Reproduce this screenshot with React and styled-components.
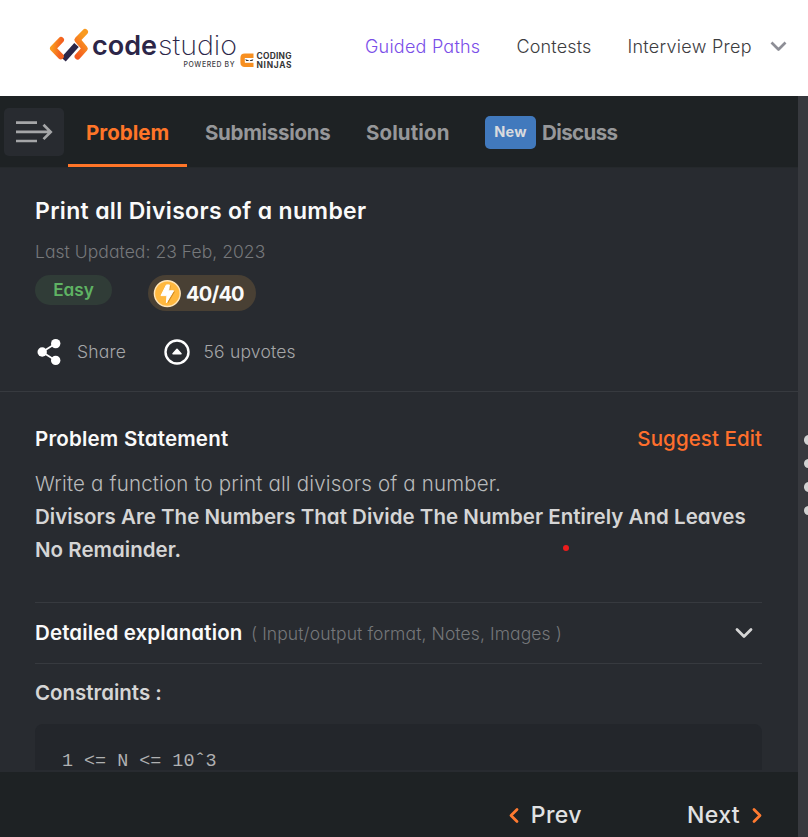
import React from 'react';
import styled, { createGlobalStyle } from 'styled-components';

const Global = createGlobalStyle`
  * { box-sizing: border-box; }
  body { margin: 0; font-family: Inter, "Open Sans", sans-serif; font-feature-settings: "cv11"; overflow: hidden; }
  h1, h2, p, pre { margin: 0; }
  svg { display: block; flex: none; }
`;

const Page = styled.div`
  width: 808px;
  height: 837px;
  display: flex;
  flex-direction: column;
  background: #282b30;
`;

const Header = styled.header`
  height: 96px;
  flex: none;
  display: flex;
  align-items: flex-start;
  background: #fff;
  padding: 25px 20px 0 48px;
`;

const Nav = styled.nav`
  display: flex;
  align-items: center;
  height: 42px;
  margin-left: 67px;
  gap: 36px;
`;

const NavLink = styled.a`
  width: ${(p) => p.$width}px;
  color: ${(p) => (p.$accent ? '#7a4ee8' : '#3d3d3f')};
  font-size: 18px;
  font-weight: 360;
  letter-spacing: ${(p) => p.$track || 0}px;
  white-space: nowrap;
`;

const NavArrow = styled.span`
  margin-left: -19px;
`;

const Workspace = styled.div`
  flex: 1;
  min-height: 0;
  display: grid;
  grid-template-columns: 798px 10px;
`;

const Panel = styled.main`
  display: flex;
  flex-direction: column;
  min-height: 0;
  overflow: hidden;
`;

const Splitter = styled.div`
  background: #37393e;
  overflow: hidden;
  display: flex;
  flex-direction: column;
  gap: 14px;
  padding: 339px 0 0 6px;
`;

const Grip = styled.i`
  flex: none;
  width: 9px;
  height: 9.5px;
  border-radius: 50%;
  background: #d2d2d2;
`;

const TabBar = styled.div`
  height: 72px;
  flex: none;
  display: flex;
  background: #1e2224;
  border-bottom: 1px solid #25292c;
`;

const MenuButton = styled.button`
  width: 60px;
  height: 48px;
  margin: 12px 4px 0;
  padding: 0 0 0 12px;
  border: 0;
  border-radius: 5px;
  background: #282b30;
`;

const Tab = styled.div`
  height: 71px;
  display: flex;
  align-items: center;
  padding: 4px 17px 0 18px;
  width: ${(p) => p.$width}px;
  gap: 6px;
  color: ${(p) => (p.$active ? '#ff7528' : '#969799')};
  border-bottom: 3px solid ${(p) => (p.$active ? '#ff7528' : 'transparent')};
  font-size: 20.5px;
  font-weight: 650;
  letter-spacing: ${(p) => p.$track || 0}px;
  white-space: nowrap;
`;

const NewBadge = styled.span`
  flex: none;
  width: 51px;
  height: 33px;
  border-radius: 5px;
  background: #4179bd;
  color: #d9dbde;
  font-size: 14.5px;
  font-weight: 750;
  line-height: 32px;
  letter-spacing: 0.2px;
  text-align: center;
`;

const Summary = styled.section`
  height: 224px;
  flex: none;
  padding: 27px 35px 0;
  border-bottom: 1px solid #373a3f;
`;

const Title = styled.h1`
  color: #fafafa;
  font-size: 23px;
  font-weight: 640;
  line-height: 32px;
  letter-spacing: 0.33px;
`;

const Updated = styled.p`
  margin-top: 12px;
  color: #76787b;
  font-size: 17.5px;
  font-weight: 350;
  line-height: 26px;
  letter-spacing: 0.05px;
`;

const Badges = styled.div`
  display: flex;
  align-items: flex-start;
  gap: 36px;
  margin-top: 10px;
`;

const Difficulty = styled.span`
  width: 77px;
  height: 30px;
  border-radius: 15px;
  background: #303c37;
  color: #5fb363;
  font-size: 17.2px;
  font-weight: 580;
  line-height: 29.5px;
  text-align: center;
`;

const Score = styled.span`
  width: 108px;
  height: 36px;
  border-radius: 18px;
  background: #494034;
  display: flex;
  align-items: center;
  gap: 5px;
  padding: 1px 0 0 5px;
  color: #fafafa;
  font-size: 20px;
  font-weight: 660;
  letter-spacing: -0.8px;
`;

const Actions = styled.div`
  display: flex;
  align-items: center;
  height: 32px;
  margin-top: 25px;
`;

const Action = styled.span`
  display: flex;
  align-items: center;
  gap: ${(p) => p.$gap}px;
  width: ${(p) => p.$width}px;
  color: #a5a6a8;
  font-size: 17.5px;
  font-weight: 350;
  line-height: 26px;
  letter-spacing: 0.2px;
  white-space: nowrap;
`;

const Details = styled.section`
  flex: 1;
  min-height: 0;
  overflow: hidden;
  padding: 32px 36px 0 35px;
`;

const HeadingRow = styled.div`
  display: flex;
  justify-content: space-between;
  align-items: center;
  height: 30px;
`;

const Heading = styled.h2`
  color: ${(p) => (p.$soft ? '#d5d5d5' : '#fafafa')};
  font-size: 20.5px;
  font-weight: 645;
  line-height: 30px;
  letter-spacing: ${(p) => p.$track || 0}px;
`;

const SuggestLink = styled.a`
  color: #ff6f2c;
  font-size: 20.5px;
  font-weight: 470;
  line-height: 30px;
  letter-spacing: 0.08px;
`;

const Statement = styled.div`
  position: relative;
  margin-top: 13px;
  height: 135px;
  color: #b9babb;
  font-size: 20.5px;
  font-weight: 350;
  line-height: 33px;
  letter-spacing: 0.16px;
  white-space: nowrap;
`;

const Strong = styled.p`
  color: #d5d5d5;
  font-weight: 640;
  letter-spacing: 0.02px;
`;

const PointerDot = styled.i`
  position: absolute;
  left: 527.5px;
  top: 78px;
  width: 6px;
  height: 6px;
  border-radius: 50%;
  background: #ed1c1c;
`;

const Accordion = styled.div`
  display: flex;
  align-items: center;
  height: 62px;
  border-top: 1px solid #373a3f;
  border-bottom: 1px solid #373a3f;
  padding-right: 8px;
`;

const Hint = styled.span`
  flex: 1;
  padding: 1px 0 0 8.5px;
  color: #75777a;
  font-size: 17.5px;
  font-weight: 350;
  line-height: 26px;
  letter-spacing: 0.1px;
`;

const ConstraintTitle = styled.div`
  margin-top: 14px;
`;

const Code = styled.pre`
  height: 46px;
  margin-top: 16px;
  padding: 26px 0 0 27px;
  overflow: hidden;
  border-radius: 8px 8px 0 0;
  background: #23262b;
  color: #b0b1b2;
  font-family: "Liberation Mono", monospace;
  font-size: 18.4px;
  line-height: 24px;
`;

const Footer = styled.footer`
  height: 65px;
  flex: none;
  display: flex;
  justify-content: flex-end;
  align-items: center;
  gap: 105px;
  padding: 21px 35px 0 0;
  background: #1e2224;
`;

const Pager = styled.a`
  display: flex;
  align-items: center;
  gap: 12px;
  color: #e1e2e3;
  font-size: 23px;
  font-weight: 460;
  letter-spacing: 0.4px;
`;

const LogoWord = styled.text`
  font-family: Inter, sans-serif;
  font-size: ${(p) => p.$size}px;
  font-weight: ${(p) => p.$weight};
  fill: ${(p) => p.$fill || '#2c2648'};
`;

function Logo() {
  return (
    <svg width="250" height="50" viewBox="48 25 250 50" role="img" aria-label="codestudio powered by Coding Ninjas">
      <defs>
        <linearGradient id="flame" x1="0" x2="1" y1="0" y2="0.3">
          <stop offset="0" stopColor="#f99b20" />
          <stop offset="1" stopColor="#f4611f" />
        </linearGradient>
        <linearGradient id="ember" x1="0" x2="0.4" y1="1" y2="0">
          <stop offset="0" stopColor="#f4571f" />
          <stop offset="1" stopColor="#f99a20" />
        </linearGradient>
      </defs>
      <g fill="none" strokeLinejoin="round">
        <path d="M63.5 59.5 L76.5 45" stroke="#2c2648" strokeWidth="6" />
        <path d="M61 40 L53 48.3 L60.8 56.3" stroke="url(#flame)" strokeWidth="6" strokeLinecap="round" />
        <path d="M85 32 L77.4 39.8 L84.8 48.6 L77.6 56.6" stroke="url(#ember)" strokeWidth="6" strokeLinecap="round" />
      </g>
      <LogoWord x="92" y="55.4" $size={27.5} $weight={570} textLength="65" lengthAdjust="spacingAndGlyphs">code</LogoWord>
      <LogoWord x="158" y="55.4" $size={27} $weight={230} textLength="79" lengthAdjust="spacingAndGlyphs">studio</LogoWord>
      <LogoWord x="183.5" y="66.5" $size={6.9} $weight={450} $fill="#414044" textLength="51" lengthAdjust="spacing">POWERED BY</LogoWord>
      <path d="M253.5 55.7 H244.8 Q242.6 55.7 242.6 57.9 V62.6 Q242.6 64.8 244.8 64.8 H253.5" fill="none" stroke="#f78f20" strokeWidth="4.4" />
      <path d="M245 58 H254 V62.6 H245 Z" fill="#fff" />
      <path d="M245.2 59.3 L248.7 60.2 V61.1 H246.2 Z M253.4 59.3 L249.9 60.2 V61.1 H252.4 Z" fill="#333" />
      <LogoWord x="256.5" y="59.2" $size={8.4} $weight={680} $fill="#343436" textLength="35" lengthAdjust="spacing">CODING</LogoWord>
      <LogoWord x="256.5" y="67.6" $size={8.4} $weight={680} $fill="#343436" textLength="35" lengthAdjust="spacing">NINJAS</LogoWord>
    </svg>
  );
}

const Chevron = ({ color, width = 17, height = 11, d = 'M2 2 L8.5 8.5 L15 2', stroke = 2.6, cap = 'round' }) => (
  <svg width={width} height={height} viewBox={`0 0 ${width} ${height}`} fill="none" stroke={color} strokeWidth={stroke} strokeLinecap={cap} strokeLinejoin="round">
    <path d={d} />
  </svg>
);

const MenuIcon = () => (
  <svg width="38" height="26" viewBox="0 0 38 26" fill="none" stroke="#a5a6a8" strokeWidth="2.7">
    <path d="M0 3.7 H21 M0 12.9 H35 M0 22 H21 M27.5 5.7 L34.7 12.9 L27.5 20.1" />
  </svg>
);

const BoltIcon = () => (
  <svg width="28" height="28" viewBox="0 0 28 28">
    <circle cx="14.3" cy="13.6" r="12.9" fill="#ffb83f" stroke="#ffe5b8" strokeWidth="1.4" />
    <path d="M14.5 5.4 H17.6 L17 11.6 H22 L14.9 23.6 L15.3 16 H9 Z" fill="#d48d21" />
    <path d="M13.4 4.9 H16.4 L15.8 10.8 H20.6 L13.4 22.8 L13.9 15.6 H8 Z" fill="#fff" stroke="#fff" strokeWidth="1" strokeLinejoin="round" />
  </svg>
);

const ShareIcon = () => (
  <svg width="28" height="28" viewBox="0 0 28 28" fill="#fff">
    <path d="M20.7 5.6 L7.2 14 L20.7 22.4" fill="none" stroke="#fff" strokeWidth="1.8" />
    <circle cx="20.7" cy="5.6" r="4.7" />
    <circle cx="7.2" cy="14" r="4.7" />
    <circle cx="20.7" cy="22.4" r="4.7" />
  </svg>
);

const UpvoteIcon = () => (
  <svg width="26" height="26" viewBox="0 0 26 26">
    <circle cx="13" cy="13" r="11.5" fill="none" stroke="#fff" strokeWidth="2.4" />
    <path d="M9 14.7 L13 10.2 L17 14.7 Z" fill="#fff" stroke="#fff" strokeWidth="1.5" strokeLinejoin="round" />
  </svg>
);

export default function App() {
  return (
    <Page>
      <Global />
      <Header>
        <Logo />
        <Nav>
          <NavLink $accent $width={115.5} $track={0.22}>Guided Paths</NavLink>
          <NavLink $width={75} $track={0.15}>Contests</NavLink>
          <NavLink $width={125} $track={0.27}>Interview Prep</NavLink>
          <NavArrow><Chevron color="#8d8e96" stroke={2.7} cap="butt" d="M1.5 1.5 L8.5 8.5 L15.5 1.5" /></NavArrow>
        </Nav>
      </Header>
      <Workspace>
        <Panel>
          <TabBar>
            <MenuButton aria-label="Open menu"><MenuIcon /></MenuButton>
            <Tab $active $width={119}>Problem</Tab>
            <Tab $width={161} $track={-0.3}>Submissions</Tab>
            <Tab $width={119} $track={0.1}>Solution</Tab>
            <Tab $width={170} $track={-0.6}><NewBadge>New</NewBadge>Discuss</Tab>
          </TabBar>
          <Summary>
            <Title>Print all Divisors of a number</Title>
            <Updated>Last Updated: 23 Feb, 2023</Updated>
            <Badges>
              <Difficulty>Easy</Difficulty>
              <Score><BoltIcon />40/40</Score>
            </Badges>
            <Actions>
              <Action $gap={14} $width={129}><ShareIcon />Share</Action>
              <Action $gap={13.5} $width={140}><UpvoteIcon />56 upvotes</Action>
            </Actions>
          </Summary>
          <Details>
            <HeadingRow>
              <Heading $track={0.2}>Problem Statement</Heading>
              <SuggestLink>Suggest Edit</SuggestLink>
            </HeadingRow>
            <Statement>
              <p>Write a function to print all divisors of a number.</p>
              <Strong>Divisors Are The Numbers That Divide The Number Entirely And Leaves<br />No Remainder.</Strong>
              <PointerDot />
            </Statement>
            <Accordion>
              <Heading $track={0.13}>Detailed explanation</Heading>
              <Hint>( Input/output format, Notes, Images )</Hint>
              <Chevron color="#d5d5d5" width={20} height={12} d="M3 2.5 L10 9.5 L17 2.5" stroke={2.8} />
            </Accordion>
            <ConstraintTitle><Heading $soft $track={-0.02}>Constraints :</Heading></ConstraintTitle>
            <Code>1 &lt;= N &lt;= 10ˆ3</Code>
          </Details>
          <Footer>
            <Pager><Chevron color="#ff7a30" width={11} height={17} d="M9 2.5 L3 8.5 L9 14.5" stroke={2.8} />Prev</Pager>
            <Pager>Next<Chevron color="#ff7a30" width={11} height={17} d="M2 2.5 L8 8.5 L2 14.5" stroke={2.8} /></Pager>
          </Footer>
        </Panel>
        <Splitter><Grip /><Grip /><Grip /><Grip /></Splitter>
      </Workspace>
    </Page>
  );
}
